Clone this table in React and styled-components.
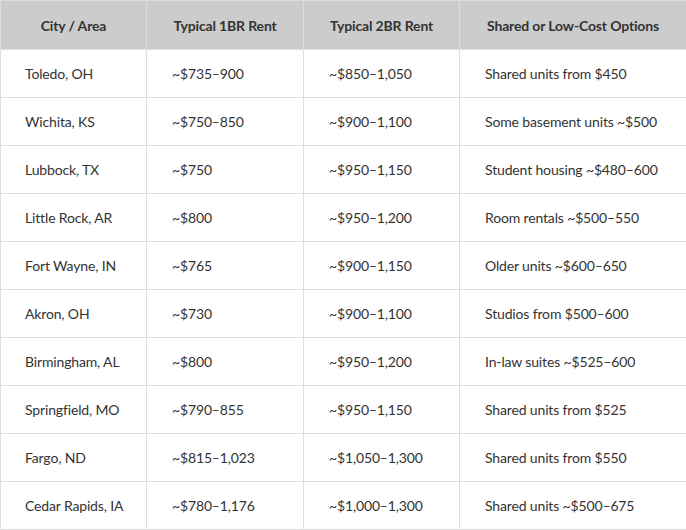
import React from "react";
import styled, {createGlobalStyle} from "styled-components";

const GlobalStyle = createGlobalStyle`
    body {
        margin: 0;
        background: #fff;
        font-family: Lato, "Noto Sans", sans-serif;
    }
`;

const Table = styled.table`
    width: 686px;
    border-collapse: collapse;
    table-layout: fixed;
    font-size: 14px;
    letter-spacing: -0.15px;
    color: #333;
    border: 1px solid #ddd;
`;

const HeadCell = styled.th`
    height: 48px;
    padding: 0 12px;
    background: #ccc;
    font-weight: 700;
    text-align: center;
    border: 1px solid #ddd;
`;

const Cell = styled.td`
    height: 47px;
    padding: 0 0 0 ${p => p.$indent || 24}px;
    border: 1px solid #ddd;
    vertical-align: middle;
`;

const columns = [
    {title: "City / Area", width: 146},
    {title: "Typical 1BR Rent", width: 157},
    {title: "Typical 2BR Rent", width: 156},
    {title: "Shared or Low-Cost Options", width: 227},
];

const rows = [
    ["Toledo, OH", "~$735–900", "~$850–1,050", "Shared units from $450"],
    ["Wichita, KS", "~$750–850", "~$900–1,100", "Some basement units ~$500"],
    ["Lubbock, TX", "~$750", "~$950–1,150", "Student housing ~$480–600"],
    ["Little Rock, AR", "~$800", "~$950–1,200", "Room rentals ~$500–550"],
    ["Fort Wayne, IN", "~$765", "~$900–1,150", "Older units ~$600–650"],
    ["Akron, OH", "~$730", "~$900–1,100", "Studios from $500–600"],
    ["Birmingham, AL", "~$800", "~$950–1,200", "In-law suites ~$525–600"],
    ["Springfield, MO", "~$790–855", "~$950–1,150", "Shared units from $525"],
    ["Fargo, ND", "~$815–1,023", "~$1,050–1,300", "Shared units from $550"],
    ["Cedar Rapids, IA", "~$780–1,176", "~$1,000–1,300", "Shared units ~$500–675"],
];

export default function App() {
    return <>
        <GlobalStyle/>
        <Table>
            <colgroup>
                {columns.map(c => <col key={c.title} style={{width: c.width}}/>)}
            </colgroup>
            <thead>
            <tr>
                {columns.map(c => <HeadCell key={c.title}>{c.title}</HeadCell>)}
            </tr>
            </thead>
            <tbody>
            {rows.map(r => <tr key={r[0]}>
                {r.map((v, i) => <Cell key={i} $indent={i === 0 ? 24 : 25}>{v}</Cell>)}
            </tr>)}
            </tbody>
        </Table>
    </>
}
